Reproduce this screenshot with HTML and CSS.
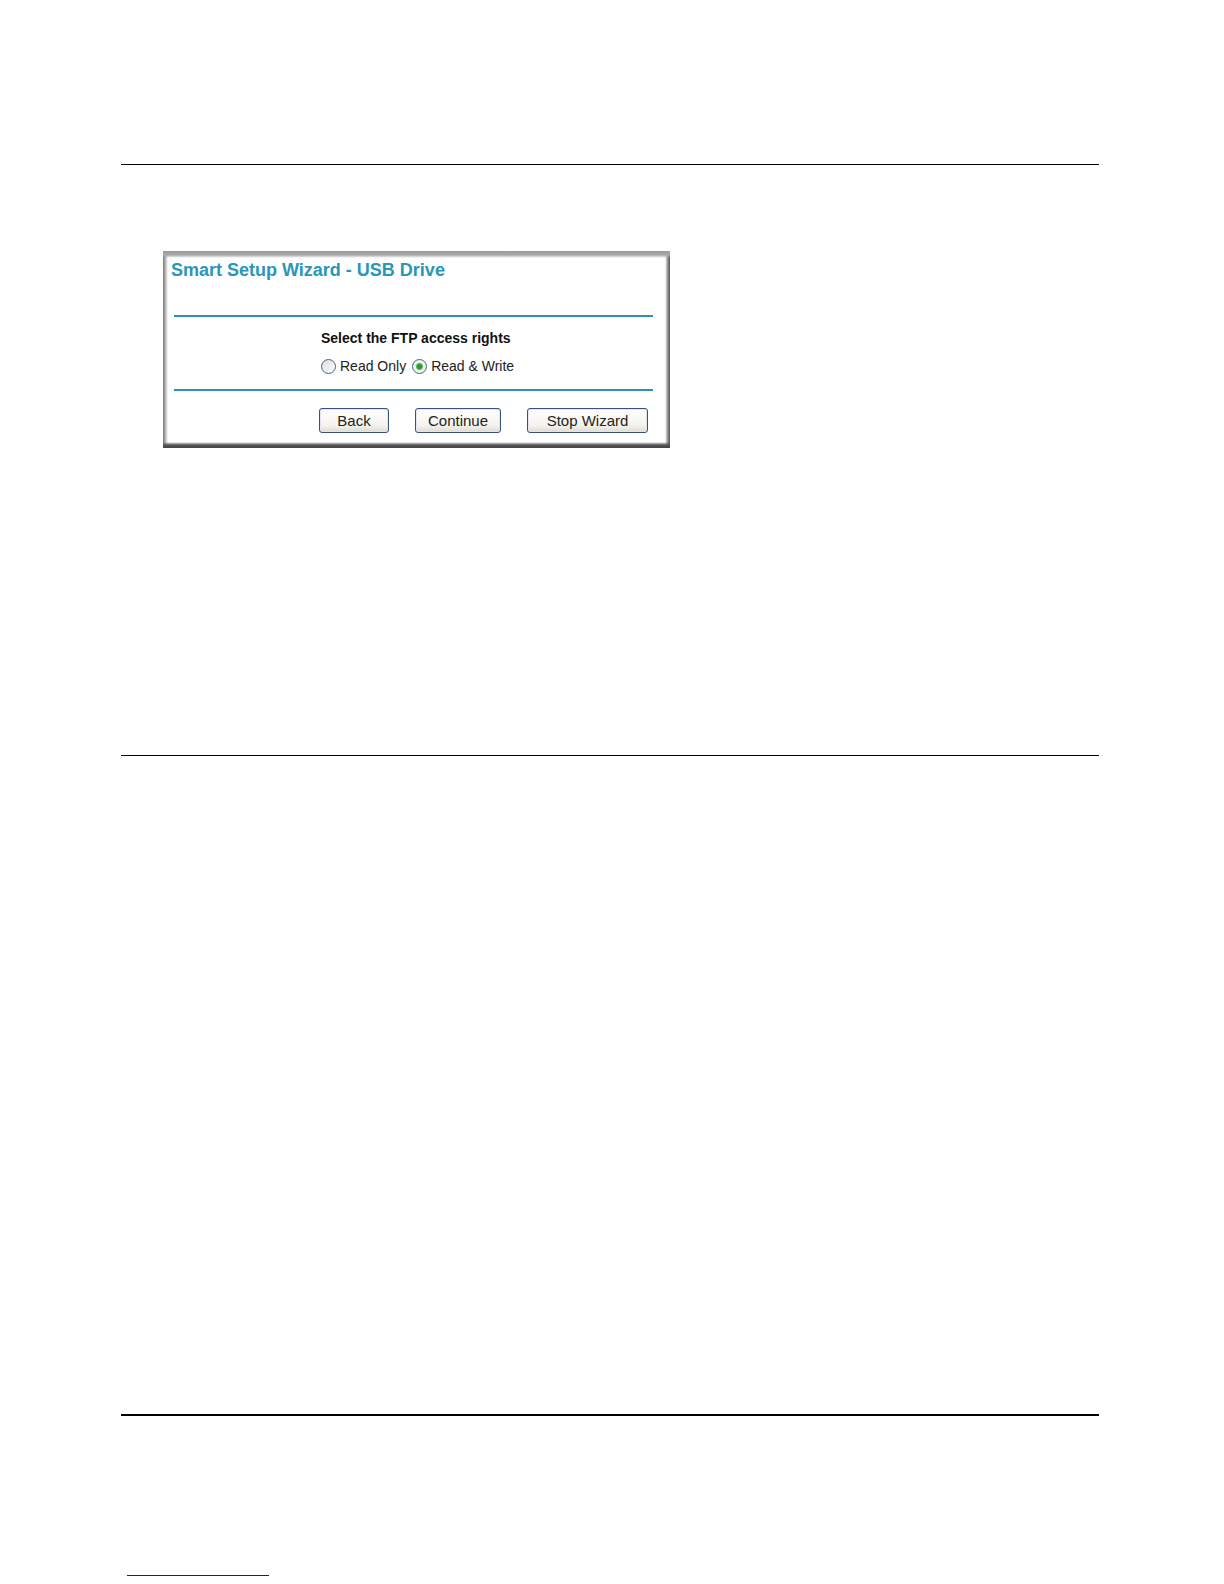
FILE: index.html
```html
<!DOCTYPE html>
<html lang="en">
<head>
    <meta charset="UTF-8">
    <meta name="viewport" content="width=device-width, initial-scale=1.0">
    <title>Smart Setup Wizard - USB Drive</title>
    <link rel="stylesheet" href="styles.css">
</head>
<body>
    <main class="page">
        <section class="section-top">
            <form class="wizard">
                <h1>Smart Setup Wizard - USB Drive</h1>
                <fieldset class="rights">
                    <legend>Select the FTP access rights</legend>
                    <div class="options">
                        <input type="radio" id="readOnly" name="access">
                        <label for="readOnly">Read Only</label>
                        <input type="radio" id="readWrite" name="access" checked>
                        <label for="readWrite">Read &amp; Write</label>
                    </div>
                </fieldset>
                <div class="button-container">
                    <button type="button" class="back">Back</button>
                    <button type="button" class="continue">Continue</button>
                    <button type="button" class="stop">Stop Wizard</button>
                </div>
            </form>
        </section>
        <section class="section-middle"></section>
        <footer class="footer">
            <hr class="footer-line">
        </footer>
    </main>
</body>
</html>
```
FILE: styles.css
```css
body {
    font-family: "Liberation Sans", Arial, sans-serif;
    background-color: #fff;
    color: #222;
    margin: 0;
}
.page {
    padding: 164px 125px 0 121px;
}
.section-top {
    border-top: 1px solid #000;
    box-sizing: border-box;
    min-height: 591px;
    padding: 86px 42px 0;
}
.section-middle {
    border-top: 1px solid #000;
    min-height: 658px;
}
.footer {
    border-top: 2px solid #000;
    padding: 159px 6px 8px;
}
.footer-line {
    width: 142px;
    margin: 0;
    border: 0;
    border-top: 1px solid #1a1a80;
}
/* bevelled frame around the wizard */
.wizard {
    box-sizing: border-box;
    max-width: 507px;
    padding: 9px 17px 15px 11px;
    background:
        linear-gradient(to top, #444, #555 3px, rgba(170, 170, 170, 0) 6px) bottom / 100% 6px no-repeat,
        linear-gradient(to bottom, #999, #aaa 4px, rgba(200, 200, 200, 0) 7px) top / 100% 7px no-repeat,
        linear-gradient(to right, #777, #aaa 2px, rgba(200, 200, 200, 0) 5px) left / 5px 100% no-repeat,
        linear-gradient(to left, #555, #888 2px, rgba(200, 200, 200, 0) 5px) right / 5px 100% no-repeat,
        #fff;
}
h1 {
    margin: 0 0 35px -3px;
    font-size: 18px;
    line-height: 20px;
    color: #2a96b8;
}
.rights {
    margin: 0;
    padding: 11px 0 14px 147px;
    border: 0;
    border-top: 2px solid #2f90b4;
    border-bottom: 2px solid #2f90b4;
}
legend {
    float: left;
    width: 100%;
    padding: 0;
    font-size: 14px;
    line-height: 20px;
    font-weight: bold;
    color: #111;
}
.options {
    clear: both;
    display: flex;
    align-items: center;
    padding-top: 9px;
    font-size: 14px;
    line-height: 18px;
}
.options label {
    margin-right: 6px;
}
input[type="radio"] {
    appearance: none;
    box-sizing: border-box;
    width: 15px;
    height: 15px;
    margin: 0 4px 0 0;
    border: 1px solid #466583;
    border-radius: 50%;
    background: linear-gradient(135deg, #dcdcd8, #fff);
}
input[type="radio"]:checked {
    background: radial-gradient(circle, #2e9a2e 2px, #55bb55 3px, #eef3ee 4px);
}
.button-container {
    display: flex;
    padding: 17px 5px 0 145px;
}
button {
    box-sizing: border-box;
    height: 25px;
    padding: 0 0 1px;
    border: 1px solid #3b4f80;
    border-radius: 3px;
    background: linear-gradient(#fff, #f4f3ee 70%, #dddbd2);
    box-shadow: inset 0 0 0 1px #e4e4ea;
    font-family: inherit;
    font-size: 15px;
    color: #222;
}
.back {
    width: 70px;
}
.continue {
    width: 86px;
    margin: 0 26px;
}
.stop {
    width: 121px;
}
```
